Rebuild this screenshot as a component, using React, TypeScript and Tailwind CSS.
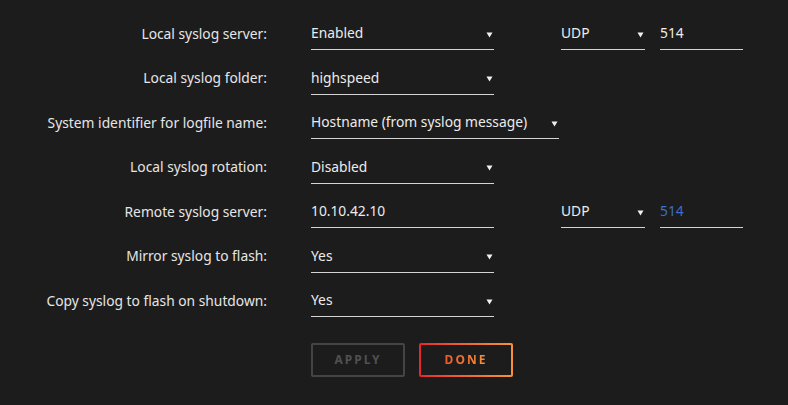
import React from "react";

const Arrow = () => (
  <svg width="7" height="7" viewBox="0 0 7 7" className="shrink-0 mt-[1px]">
    <path d="M0.5 1.5 L6.5 1.5 L3.5 6.5 Z" fill="#f0f0f0" />
  </svg>
);

const Select = ({ value, w }: { value: string; w: string }) => (
  <div className={`${w} h-[34px] flex items-center justify-between border-b border-[#d4d4d4] pr-[1px] pt-[2px]`}>
    <span className="text-[#ececec]">{value}</span>
    <Arrow />
  </div>
);

const Row = ({ label, children }: { label: string; children: React.ReactNode }) => (
  <div className="flex items-center h-[44.5px]">
    <div className="w-[267px] text-right text-[#e6e6e6] pt-[2px]">{label}</div>
    <div className="ml-[44px] flex items-center">{children}</div>
  </div>
);

export default function App() {
  return (
    <div
      className="w-[788px] h-[405px] bg-[#1c1c1c] pt-[11px] text-[13.8px]"
      style={{ fontFamily: '"Noto Sans", "Open Sans", sans-serif' }}
    >
      <Row label="Local syslog server:">
        <Select value="Enabled" w="w-[183px]" />
        <div className="ml-[67px]">
          <Select value="UDP" w="w-[84px]" />
        </div>
        <div className="ml-[15px] w-[83px] h-[34px] pt-[2px] flex items-center border-b border-[#d4d4d4] text-[#ececec]">514</div>
      </Row>
      <Row label="Local syslog folder:">
        <Select value="highspeed" w="w-[183px]" />
      </Row>
      <Row label="System identifier for logfile name:">
        <Select value="Hostname (from syslog message)" w="w-[248px]" />
      </Row>
      <Row label="Local syslog rotation:">
        <Select value="Disabled" w="w-[183px]" />
      </Row>
      <Row label="Remote syslog server:">
        <div className="w-[183px] h-[34px] pt-[2px] flex items-center border-b border-[#d4d4d4] text-[#ececec]">10.10.42.10</div>
        <div className="ml-[67px]">
          <Select value="UDP" w="w-[84px]" />
        </div>
        <div className="ml-[15px] w-[83px] h-[34px] pt-[2px] flex items-center border-b border-[#d4d4d4] text-[#3d6fcc]">514</div>
      </Row>
      <Row label="Mirror syslog to flash:">
        <Select value="Yes" w="w-[183px]" />
      </Row>
      <Row label="Copy syslog to flash on shutdown:">
        <Select value="Yes" w="w-[183px]" />
      </Row>
      <div className="flex ml-[311px] mt-[20px] gap-[14px]">
        <div className="w-[94px] h-[34px] border-2 border-[#444] rounded-[2px] flex items-center justify-center text-[12px] font-bold tracking-[2px] text-[#505050]">
          APPLY
        </div>
        <div className="w-[94px] h-[34px] rounded-[2px] p-[2px] bg-gradient-to-r from-[#e5262b] to-[#f7913a]">
          <div className="w-full h-full bg-[#1c1c1c] flex items-center justify-center">
            <span className="text-[12px] font-bold tracking-[2px] bg-gradient-to-r from-[#f25a2a] to-[#f7913a] bg-clip-text text-transparent">
              DONE
            </span>
          </div>
        </div>
      </div>
    </div>
  );
}
